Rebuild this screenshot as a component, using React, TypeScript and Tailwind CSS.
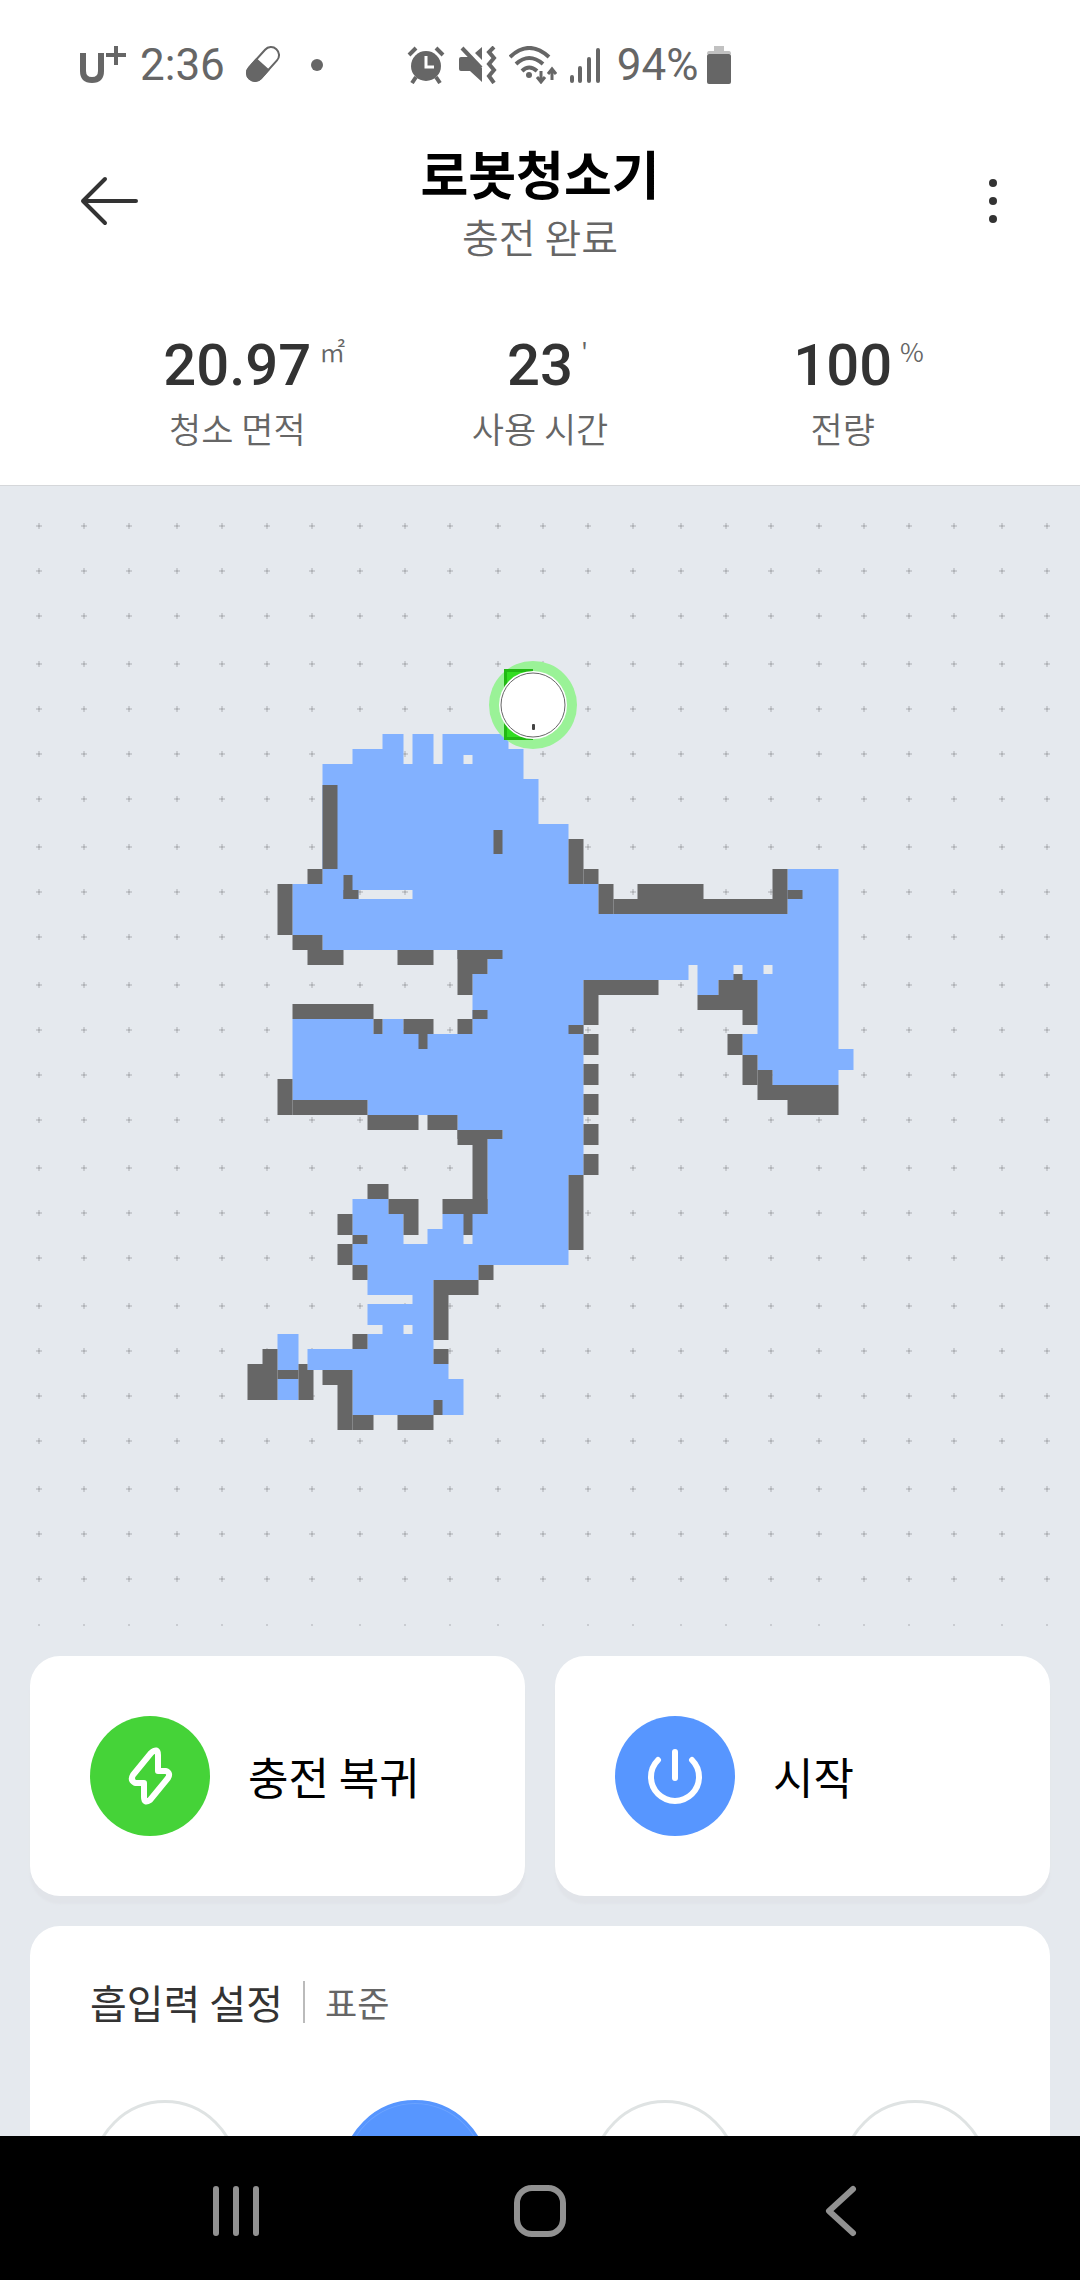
import React from "react";

const CROSS_X = [
  39, 84, 129, 177, 222, 267, 312, 360, 405, 450, 498, 543, 588, 633, 681, 726,
  771, 819, 864, 909, 954, 1002, 1047,
];
const CROSS_Y = [
  526, 571, 616, 664, 709, 754, 799, 847, 892, 937, 985, 1030, 1075, 1120,
  1168, 1213, 1258, 1306, 1351, 1396, 1441, 1489, 1534, 1579, 1627,
];

const FLOOR = [
  "M322 764H352V749H382V734H403V764H412V734H433V764H442V734H508V749H523V779H538V824H568V884H598V914H787V869H838",
  "V1049H853V1070H838V1085H772V1070H757V1055H742V1034H757V980H718V995H697V965H688V980H583V1175H568V1265H478V1280H433",
  "V1364H448V1379H463V1415H352V1370H307V1349H367V1334H382V1325H367V1304H412V1295H367V1265H352V1244H367V1235H352V1199",
  "H388V1214H403V1244H427V1229H442V1214H487V1139H502V1130H457V1115H367V1100H292V1019H373V1034H382V1019H403V1034H472",
  "V974H487V950H322V935H292V884H322Z",
  "M463 755H472V764H463ZM358 890H412V899H358ZM733 965H742V974H733ZM763 965H772V974H763Z",
  "M463 1235H472V1244H463ZM403 1325H412V1334H403Z",
  "M277 1334H298V1370H277ZM277 1379H298V1400H277Z",
].join("");

// x1, y1, x2, y2
const WALLS = [
  [322, 785, 337, 869],
  [307, 869, 322, 884],
  [277, 884, 292, 935],
  [292, 935, 322, 950],
  [307, 950, 343, 965],
  [397, 950, 433, 965],
  [457, 950, 502, 959],
  [457, 950, 487, 974],
  [457, 974, 472, 995],
  [343, 875, 352, 899],
  [343, 890, 358, 899],
  [493, 830, 502, 854],
  [568, 839, 583, 884],
  [583, 869, 598, 884],
  [598, 884, 613, 914],
  [613, 899, 787, 914],
  [637, 884, 703, 899],
  [772, 869, 787, 899],
  [787, 890, 802, 899],
  [733, 974, 742, 980],
  [718, 980, 757, 995],
  [697, 995, 757, 1010],
  [742, 1010, 757, 1025],
  [727, 1034, 742, 1055],
  [742, 1055, 757, 1085],
  [757, 1070, 772, 1085],
  [757, 1085, 838, 1100],
  [787, 1100, 838, 1115],
  [583, 980, 658, 995],
  [583, 995, 598, 1025],
  [568, 1025, 583, 1034],
  [583, 1034, 598, 1055],
  [583, 1064, 598, 1085],
  [583, 1094, 598, 1115],
  [583, 1124, 598, 1145],
  [583, 1154, 598, 1175],
  [568, 1175, 583, 1250],
  [292, 1004, 373, 1019],
  [373, 1019, 382, 1034],
  [403, 1019, 433, 1034],
  [418, 1034, 427, 1049],
  [457, 1019, 472, 1034],
  [472, 1010, 487, 1019],
  [277, 1079, 292, 1115],
  [292, 1100, 367, 1115],
  [367, 1115, 418, 1130],
  [427, 1115, 457, 1130],
  [457, 1130, 502, 1139],
  [457, 1130, 487, 1145],
  [472, 1145, 487, 1214],
  [442, 1199, 487, 1214],
  [463, 1214, 472, 1235],
  [367, 1184, 388, 1199],
  [388, 1199, 418, 1214],
  [403, 1214, 418, 1235],
  [337, 1214, 352, 1235],
  [352, 1235, 367, 1244],
  [337, 1244, 352, 1265],
  [352, 1265, 367, 1280],
  [478, 1265, 493, 1280],
  [433, 1280, 478, 1295],
  [433, 1295, 448, 1340],
  [433, 1349, 448, 1364],
  [352, 1334, 367, 1349],
  [262, 1349, 277, 1364],
  [247, 1364, 277, 1400],
  [277, 1370, 298, 1379],
  [298, 1364, 307, 1370],
  [298, 1370, 313, 1400],
  [322, 1370, 352, 1385],
  [337, 1385, 352, 1430],
  [352, 1415, 373, 1430],
  [397, 1415, 433, 1430],
  [433, 1400, 442, 1415],
];

const STATS = [
  { value: "20.97", unit: "㎡", label: "청소 면적" },
  { value: "23", unit: "'", label: "사용 시간" },
  { value: "100", unit: "%", label: "전량" },
];

const SUCTION_LEVELS = ["저소음", "표준", "강력", "최대"];

function StatusBar() {
  return (
    <div className="flex h-[130px] items-center px-20 font-[Roboto,sans-serif] text-[44px] leading-none text-[#666]">
      <svg width="48" height="40" viewBox="0 0 48 40" fill="none" stroke="#666">
        <path d="M3 8V26Q3 35 12 35Q21 35 21 26V8" strokeWidth="6" />
        <path d="M26 10H46M36 1V20" strokeWidth="4" />
      </svg>
      <span className="ml-3">2:36</span>
      <svg width="38" height="40" viewBox="0 0 38 40" className="ml-5">
        <g transform="rotate(42 18 19)">
          <rect x="10" y="-1" width="16" height="40" rx="8" fill="none" stroke="#666" strokeWidth="2" />
          <path d="M9 19H27V31A9 9 0 0 1 9 31Z" fill="#666" />
        </g>
      </svg>
      <span className="ml-7 h-3 w-3 rounded-full bg-[#666]" />
      <svg width="38" height="38" viewBox="0 0 38 38" className="ml-[84px]" fill="none" stroke="#666">
        <circle cx="19" cy="20" r="15" fill="#666" stroke="none" />
        <path d="M2 9L9 2M36 9L29 2M5 37L9 31M33 37L29 31" strokeWidth="4" />
        <path d="M19 10V21H27" stroke="white" strokeWidth="3" />
      </svg>
      <svg width="38" height="38" viewBox="0 0 38 38" className="ml-[14px]" fill="#666">
        <path d="M0 13Q0 11 2 11H10L23 22V36L11 25H2Q0 25 0 23ZM16 7L23 1V14Z" />
        <path d="M3 2L22 22" fill="none" stroke="#666" strokeWidth="4" />
        <path d="M35 1L30 6L35 12L30 18L35 24L30 30L35 37" fill="none" stroke="#666" strokeWidth="4" />
      </svg>
      <svg width="48" height="38" viewBox="0 0 48 38" className="ml-3" fill="none" stroke="#666" strokeWidth="4">
        <path d="M1 11Q20 -7 40 11M7 18Q20 6 34 18M13 25Q20 18 28 25" />
        <circle cx="20" cy="29" r="3" fill="#666" stroke="none" />
        <path d="M32 25V36M28 31L32 36L36 31M43 34V23M39 28L43 23L47 28" strokeWidth="3" />
      </svg>
      <svg width="32" height="38" viewBox="0 0 32 38" className="ml-3" stroke="#666" strokeWidth="4" strokeLinecap="round">
        <path d="M3 31V35M11 22V35M20 13V35M29 4V35" />
      </svg>
      <span className="ml-4">94%</span>
      <svg width="24" height="38" viewBox="0 0 24 38" className="ml-2">
        <path d="M7 0H17V5H22Q24 5 24 8H0Q0 5 2 5H7Z" fill="#c1c1c1" />
        <rect y="8" width="24" height="30" rx="2" fill="#666" />
      </svg>
    </div>
  );
}

function Header() {
  return (
    <header className="flex items-start justify-between px-20 pt-[3px]">
      <button aria-label="뒤로" className="flex h-[136px] w-20 items-center">
        <svg width="60" height="50" viewBox="0 0 60 50" fill="none" stroke="#333" strokeWidth="4" strokeLinecap="round" strokeLinejoin="round">
          <path d="M56 25H3M25 3L3 25L25 47" />
        </svg>
      </button>
      <div className="flex flex-col items-center">
        <h1 className="text-[52px] leading-[80px] font-bold text-black">로봇청소기</h1>
        <p className="text-[40px] leading-[46px] font-[350] text-[#666]">충전 완료</p>
      </div>
      <button aria-label="메뉴" className="flex h-[136px] w-20 items-center justify-end">
        <svg width="12" height="48" viewBox="0 0 12 48" fill="#333">
          <circle cx="5" cy="6" r="4" />
          <circle cx="5" cy="24" r="4" />
          <circle cx="5" cy="42" r="4" />
        </svg>
      </button>
    </header>
  );
}

function Stats() {
  return (
    <dl className="grid grid-cols-3 border-b border-[#d5d7da] px-[86px] pt-[58px] pb-8">
      {STATS.map((stat) => (
        <div key={stat.label} className="flex flex-col-reverse items-center">
          <dt className="text-[35px] leading-[50px] font-[350] text-[#666]">{stat.label}</dt>
          <dd className="relative font-[Roboto,sans-serif] text-[58px] leading-[76px] font-medium text-[#333]">
            {stat.value}
            <span className="absolute top-1 left-full ml-2 font-['Noto_Sans_CJK_KR',sans-serif] text-[26px] leading-10 font-[350] text-[#666]">
              {stat.unit}
            </span>
          </dd>
        </div>
      ))}
    </dl>
  );
}

function CleaningMap() {
  return (
    <svg viewBox="0 486 1080 1140" className="block w-full" role="img" aria-label="청소 지도">
      {CROSS_Y.map((y) =>
        CROSS_X.map((x) => (
          <g key={`${x}-${y}`} fill="#000" fillOpacity="0.12">
            <rect x={x - 3} y={y - 1} width="6" height="2" />
            <rect x={x - 1} y={y - 3} width="2" height="6" />
          </g>
        ))
      )}
      <g transform="translate(0.5 0)">
        <path d={FLOOR} fill="#82b1ff" fillRule="evenodd" />
        {WALLS.map(([x1, y1, x2, y2]) => (
          <rect key={`${x1}-${y1}-${x2}`} x={x1} y={y1} width={x2 - x1} height={y2 - y1} fill="#666" />
        ))}
      </g>
      <circle cx="533" cy="705" r="44" fill="#9af297" />
      <path d="M504 669H533V740H504Z" fill="#22b914" />
      <path d="M507 672H533V737H507Z" fill="#33dd22" />
      <circle cx="533" cy="705" r="34" fill="#fff" />
      <circle cx="533" cy="705" r="32" fill="none" stroke="#666" />
      <rect x="532" y="724" width="3" height="6" rx="1" fill="#444" />
    </svg>
  );
}

function ActionButton({
  label,
  color,
  children,
}: {
  label: string;
  color: string;
  children: React.ReactNode;
}) {
  return (
    <button className="flex h-60 flex-1 items-center gap-[38px] rounded-[30px] bg-white px-[60px] shadow-[0_8px_2px_#e1e4e9]">
      <span className={`flex h-[120px] w-[120px] items-center justify-center rounded-full ${color}`}>
        {children}
      </span>
      <span className="text-[44px] text-black">{label}</span>
    </button>
  );
}

function NavBar() {
  return (
    <nav className="flex h-36 shrink-0 items-center justify-around bg-black px-[85px] pt-[6px]">
      <button aria-label="최근 앱">
        <svg width="50" height="54" viewBox="0 0 50 54" stroke="#919191" strokeWidth="6" strokeLinecap="round">
          <path d="M5 5V49M25 5V49M45 5V49" />
        </svg>
      </button>
      <button aria-label="홈">
        <svg width="54" height="54" viewBox="0 0 54 54" fill="none" stroke="#919191" strokeWidth="6">
          <rect x="4" y="4" width="46" height="46" rx="15" />
        </svg>
      </button>
      <button aria-label="이전">
        <svg width="50" height="54" viewBox="0 0 50 54" fill="none" stroke="#919191" strokeWidth="6" strokeLinecap="round" strokeLinejoin="round">
          <path d="M34 5L10 27L34 49" />
        </svg>
      </button>
    </nav>
  );
}

export default function App() {
  return (
    <div className="flex h-screen flex-col overflow-hidden bg-[#e5e9ee] font-['Noto_Sans_CJK_KR',sans-serif]">
      <div className="bg-white">
        <StatusBar />
        <Header />
        <Stats />
      </div>
      <main className="min-h-0 flex-1 overflow-hidden">
        <CleaningMap />
        <div className="mt-[30px] flex gap-[30px] px-[30px]">
          <ActionButton label="충전 복귀" color="bg-[#45d338]">
            <svg width="48" height="58" viewBox="0 0 48 58" fill="none" stroke="white" strokeWidth="6" strokeLinejoin="round">
              <path d="M25 6Q32 0 32 8V24H40Q45 26 42 31L24 53Q18 57 18 50V36H9Q4 33 7 28Z" />
            </svg>
          </ActionButton>
          <ActionButton label="시작" color="bg-[#5796ff]">
            <svg width="56" height="56" viewBox="0 0 56 56" fill="none" stroke="white" strokeWidth="6" strokeLinecap="round">
              <path d="M28 4V30M11 12A24 24 0 1 0 45 12" />
            </svg>
          </ActionButton>
        </div>
        <section className="mx-[30px] mt-[30px] rounded-t-[30px] bg-white pt-12">
          <div className="flex h-14 items-center px-[60px]">
            <h2 className="text-[40px] text-[#333]">흡입력 설정</h2>
            <span className="mx-5 h-[42px] w-[2px] bg-[#bbb]" />
            <span className="text-[35px] text-[#666]">표준</span>
          </div>
          <div className="mt-[70px] flex justify-between px-[62px]">
            {SUCTION_LEVELS.map((level) => (
              <button
                key={level}
                aria-label={level}
                className={
                  level === "표준"
                    ? "h-[146px] w-[146px] rounded-full border-[3px] border-[#5796ff] bg-[#5796ff] shadow-[inset_0_0_0_1px_#6ba3ff]"
                    : "h-[146px] w-[146px] rounded-full border-[3px] border-[#dfe3e3] bg-white"
                }
              />
            ))}
          </div>
        </section>
      </main>
      <NavBar />
    </div>
  );
}
